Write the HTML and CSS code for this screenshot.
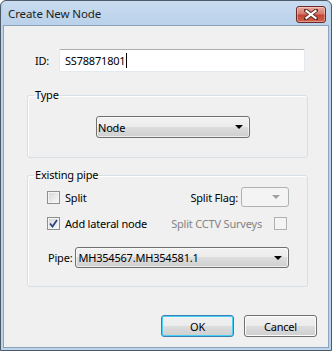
FILE: index.html
```html
<!DOCTYPE html>
<html lang="en">
<head>
  <meta charset="UTF-8" />
  <title>Create New Node</title>
  <link rel="stylesheet" href="styles.css">
</head>
<body>
  <div class="window">
    <div class="titlebar">
      <span class="title">Create New Node</span>
      <span class="close">
        <svg width="14" height="11" viewBox="0 0 14 11">
          <path d="M2 1.5 L12 9.5 M12 1.5 L2 9.5" stroke="#5a2a26" stroke-width="4" stroke-linecap="square"/>
          <path d="M2.5 2 L11.5 9 M11.5 2 L2.5 9" stroke="#fff" stroke-width="2.2" stroke-linecap="square"/>
        </svg>
      </span>
    </div>

    <div class="client">
      <div class="id-row">
        <span class="id-label">ID:</span>
        <div class="textbox">SS78871801<span class="caret"></span></div>
      </div>

      <fieldset class="group group-type">
        <legend>Type</legend>
        <div class="group-body">
          <div class="combo combo-type"><span class="combo-text">Node</span><span class="arrow"></span></div>
        </div>
      </fieldset>

      <fieldset class="group group-pipe">
        <legend>Existing pipe</legend>
        <div class="group-body">
          <div class="row">
            <span class="check"></span>
            <span class="check-label">Split</span>
            <span class="spacer"></span>
            <span class="flag-label">Split Flag:</span>
            <div class="combo combo-flag disabled"><span class="arrow"></span></div>
          </div>
          <div class="row row-lateral">
            <span class="check checked">
              <svg width="9" height="9" viewBox="0 0 9 9">
                <path d="M1 4.5 L3.5 7.5 L8 1" fill="none" stroke="#2b4483" stroke-width="1.8"/>
              </svg>
            </span>
            <span class="check-label">Add lateral node</span>
            <span class="spacer"></span>
            <span class="muted">Split CCTV Surveys</span>
            <span class="check disabled cctv"></span>
          </div>
          <div class="row row-pipe">
            <span class="pipe-label">Pipe:</span>
            <div class="combo combo-pipe"><span class="combo-text">MH354567.MH354581.1</span><span class="arrow"></span></div>
          </div>
        </div>
      </fieldset>

      <div class="buttons">
        <button class="btn btn-default">OK</button>
        <button class="btn">Cancel</button>
      </div>
    </div>
  </div>
</body>
</html>
```

FILE: styles.css
```css
* {
  box-sizing: border-box;
}

body {
  margin: 0;
  background: #fff;
  font-family: "Noto Sans", "Open Sans", sans-serif;
  font-size: 11px;
  letter-spacing: -0.2px;
  color: #000;
}

.window {
  width: 332px;
  height: 351px;
  border: 1px solid #4c5a6a;
  border-radius: 6px 6px 0 0;
  background: #bcd3ea;
  padding: 0 2px 2px 2px;
  display: flex;
  flex-direction: column;
}

.titlebar {
  height: 24px;
  display: flex;
  align-items: flex-start;
  justify-content: space-between;
  padding-left: 5px;
  background: linear-gradient(#c9dcf0, #b9d1ea);
  border-radius: 5px 5px 0 0;
}

.title {
  margin-top: 5px;
  font-size: 11.5px;
  letter-spacing: -0.1px;
  line-height: 16px;
  color: #1e1e1e;
}

.close {
  margin-top: 5px;
  margin-right: 3px;
  width: 30px;
  height: 17px;
  border: 1px solid #6b2a26;
  border-radius: 3px;
  background: linear-gradient(#e9a99f 0%, #d67a6c 45%, #c24533 55%, #d2624c 100%);
  display: flex;
  align-items: center;
  justify-content: center;
  box-shadow: inset 0 0 0 1px rgba(255, 255, 255, 0.35);
}

.client {
  flex: 1;
  background: #f0f0f0;
  border: 1px solid #8ca3bd;
  display: flex;
  flex-direction: column;
}

.id-row {
  display: flex;
  align-items: center;
  margin-top: 23px;
  padding-left: 31px;
}

.id-label {
  width: 24px;
}

.textbox {
  width: 246px;
  height: 23px;
  background: #fff;
  border: 1px solid #e3e9ef;
  border-top-color: #abadb3;
  border-radius: 2px;
  padding-left: 5px;
  display: flex;
  align-items: center;
}

.caret {
  width: 1px;
  height: 15px;
  background: #000;
  margin-left: 1px;
}

.group {
  margin: 0 20px 0 23px;
  padding: 0;
  border: 1px solid #d5dfe5;
  border-radius: 3px;
  box-shadow: inset 1px 1px 0 #fff;
  min-width: 0;
}

.group legend {
  margin-left: 6px;
  padding: 0 1px;
  line-height: 16px;
}

.group-type {
  margin-top: 15px;
}

.group-type .group-body {
  padding: 13px 0 19px 68px;
}

.group-pipe {
  margin-top: 9px;
}

.group-pipe .group-body {
  padding: 4px 18px 18px 19px;
}

.combo {
  height: 22px;
  border: 1px solid #707070;
  border-radius: 3px;
  background: linear-gradient(#f2f2f2 0%, #ebebeb 50%, #dddddd 50%, #cfcfcf 100%);
  box-shadow: inset 0 0 0 1px rgba(255, 255, 255, 0.6);
  display: flex;
  align-items: center;
  padding: 0 6px 0 2px;
}

.combo-text {
  flex: 1;
}

.arrow {
  width: 0;
  height: 0;
  border-left: 4px solid transparent;
  border-right: 4px solid transparent;
  border-top: 4px solid #000;
}

.combo-type {
  width: 154px;
  padding-left: 1px;
}

.combo-flag {
  width: 48px;
  height: 20px;
  justify-content: flex-end;
  padding-right: 8px;
}

.combo.disabled {
  border-color: #adb2b5;
  background: #f4f4f4;
  box-shadow: none;
}

.combo.disabled .arrow {
  border-top-color: #a0a0a0;
}

.combo-pipe {
  width: 216px;
  height: 21px;
}

.row {
  display: flex;
  align-items: center;
  height: 20px;
}

.row-lateral {
  margin-top: 6px;
}

.row-pipe {
  margin-top: 14px;
  height: 21px;
}

.spacer {
  flex: 1;
}

.check {
  width: 13px;
  height: 13px;
  border: 1px solid #8e8f8f;
  background: linear-gradient(135deg, #d4d4d4, #fbfbfb);
  box-shadow: inset 0 0 0 1px #f4f4f4;
  display: flex;
  align-items: center;
  justify-content: center;
}

.check.disabled {
  border-color: #b1b1b1;
  background: #f4f4f4;
}

.check-label {
  margin-left: 5px;
}

.flag-label {
  margin-right: 3px;
}

.muted {
  color: #838383;
  margin-right: 12px;
}

.cctv {
  margin-right: 2px;
}

.pipe-label {
  margin-left: 1px;
  margin-right: 3px;
}

.buttons {
  display: flex;
  justify-content: flex-end;
  gap: 10px;
  margin-top: 28px;
  padding-right: 11px;
}

.btn {
  width: 73px;
  height: 22px;
  font-family: inherit;
  font-size: 11px;
  letter-spacing: -0.2px;
  color: #000;
  border: 1px solid #707070;
  border-radius: 3px;
  background: linear-gradient(#f2f2f2 0%, #ebebeb 50%, #dddddd 50%, #cfcfcf 100%);
  box-shadow: inset 0 0 0 1px #fcfcfc;
  padding: 0;
}

.btn-default {
  border-color: #3c7fb1;
  box-shadow: inset 0 0 0 1px #48d0f8;
}
```
